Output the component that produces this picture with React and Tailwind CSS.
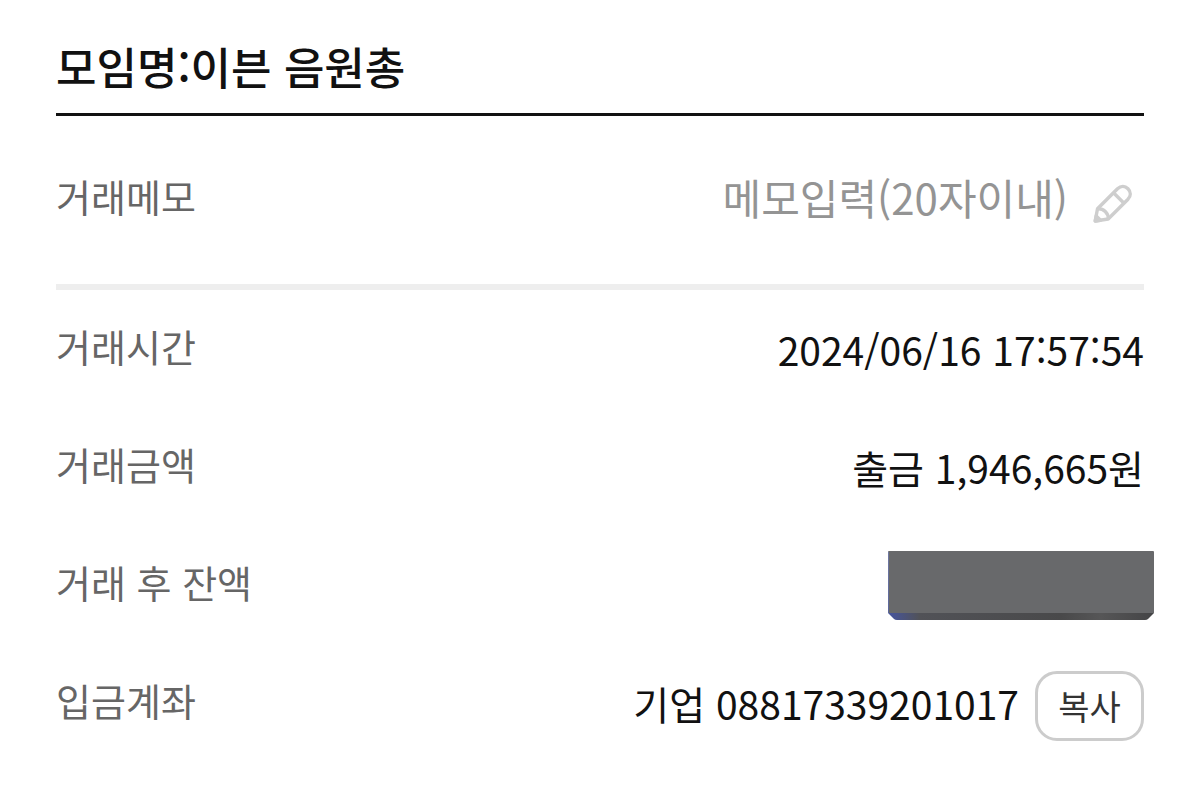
const labelClass = 'shrink-0 text-[38px] leading-[64px] text-[#666666]';
const valueClass = 'text-[39px] leading-[70px] text-[#111111]';

function PencilIcon() {
  return (
    <svg viewBox="0 0 40 40" className="h-10 w-10" fill="none" stroke="#cecece" strokeWidth="3.4" strokeLinejoin="round" aria-hidden="true">
      <path d="M3.2 37 L5.5 24.8 L25.5 4.8 C29 1.6 33 1.8 36 4.8 C39 7.8 39 12 36 15.2 L16.2 35 Z" />
      <path d="M21.5 8.8 L32 19.2" />
      <path d="M5.5 24.8 C11.5 24.3 16.7 29 16.2 35" />
      <path d="M3.2 37 L4.2 32 L8.5 36.3 Z" fill="#cecece" />
    </svg>
  );
}

// Solid cover over the balance, with cut lower corners
function BalanceMask() {
  return (
    <svg viewBox="0 0 266 70" className="-mr-[10px] h-[70px] w-[266px]" role="img" aria-label="잔액 숨김">
      <defs>
        <linearGradient id="maskEdge" x1="0" x2="1" y1="0" y2="0">
          <stop offset="0" stopColor="#4655a0" />
          <stop offset="0.12" stopColor="#515257" />
          <stop offset="0.65" stopColor="#49494a" />
          <stop offset="0.8" stopColor="#565657" />
          <stop offset="1" stopColor="#444446" />
        </linearGradient>
        <linearGradient id="maskSide" x1="0" x2="0" y1="0" y2="1">
          <stop offset="0" stopColor="#7078a0" />
          <stop offset="1" stopColor="#5c679b" />
        </linearGradient>
      </defs>
      <path d="M1 1 H265 Q266 1 266 2 V63 H0 V2 Q0 1 1 1 Z" fill="#68696b" />
      <path d="M0 63 H266 L260 69 Q259 70 257 70 H9 Q7 70 6 69 Z" fill="url(#maskEdge)" />
      <path d="M0 2 H1 V63 H0 Z" fill="url(#maskSide)" />
    </svg>
  );
}

function DetailRow({ label, children }) {
  return (
    <div className="flex h-[70px] items-start justify-between">
      <dt className={labelClass}>{label}</dt>
      <dd className="flex items-baseline gap-4">{children}</dd>
    </div>
  );
}

export default function App() {
  return (
    <main lang="ko" className="min-h-screen bg-white px-14 pt-[34px] pb-10 font-['Noto_Sans_CJK_KR',sans-serif]">
      <h1 className="border-b-[3px] border-[#111111] pb-[14px] text-[44px] leading-[65px] font-medium text-[#111111]">
        모임명:이븐 음원총
      </h1>

      {/* Memo */}
      <div className="flex items-start justify-between border-b-[6px] border-[#eeeeee] pt-12 pb-14">
        <label htmlFor="memo" className={labelClass}>거래메모</label>
        <div className="flex items-end gap-6 pr-3">
          <input
            id="memo"
            type="text"
            maxLength={20}
            placeholder="메모입력(20자이내)"
            className="h-16 w-[400px] text-right text-[42px] text-[#111111] outline-none placeholder:text-[#949494]"
          />
          <button type="button" aria-label="메모 수정" className="pb-1">
            <PencilIcon />
          </button>
        </div>
      </div>

      {/* Transaction details */}
      <dl className="flex flex-col gap-12 pt-6">
        <DetailRow label="거래시간">
          <span className={valueClass}>2024/06/16 17:57:54</span>
        </DetailRow>
        <DetailRow label="거래금액">
          <span className={valueClass}>출금 1,946,665원</span>
        </DetailRow>
        <DetailRow label="거래 후 잔액">
          <BalanceMask />
        </DetailRow>
        <DetailRow label="입금계좌">
          <span className={valueClass}>기업 08817339201017</span>
          <button type="button" className="h-[70px] w-[109px] rounded-[22px] border-[3px] border-[#cccccc] text-[34px] text-[#333333]">
            복사
          </button>
        </DetailRow>
      </dl>
    </main>
  );
}
